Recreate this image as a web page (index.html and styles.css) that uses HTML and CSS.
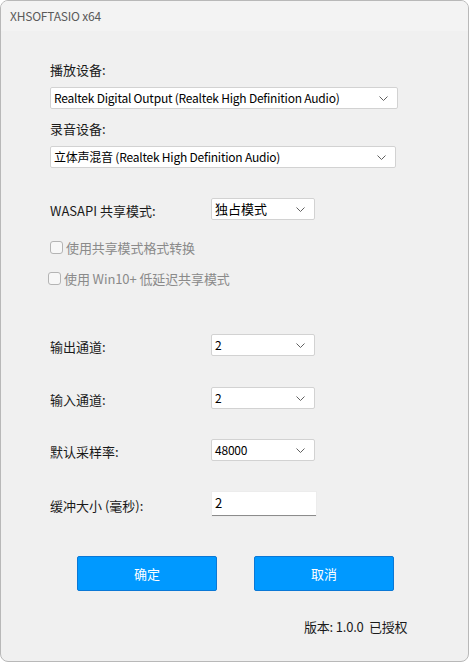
FILE: index.html
```html
<!DOCTYPE html>
<html lang="zh-CN">
<head>
<meta charset="utf-8">
<title>XHSOFTASIO x64</title>
<link rel="stylesheet" href="styles.css">
</head>
<body>
<div class="window">
  <div class="titlebar">XHSOFTASIO x64</div>
  <div class="content">
    <div class="label label-first">播放设备:</div>
    <div class="select wide w1"><span>Realtek Digital Output (Realtek High Definition Audio)</span><svg class="chev" viewBox="0 0 9 5"><path d="M0.5 0.5 L4.5 4.5 L8.5 0.5" /></svg></div>
    <div class="label label-second">录音设备:</div>
    <div class="select wide w2"><span>立体声混音 (Realtek High Definition Audio)</span><svg class="chev" viewBox="0 0 9 5"><path d="M0.5 0.5 L4.5 4.5 L8.5 0.5" /></svg></div>

    <div class="row row-wasapi">
      <div class="rlabel">WASAPI 共享模式:</div>
      <div class="select small"><span class="cjk">独占模式</span><svg class="chev" viewBox="0 0 9 5"><path d="M0.5 0.5 L4.5 4.5 L8.5 0.5" /></svg></div>
    </div>

    <div class="check check1"><span class="box"></span><span class="ctext">使用共享模式格式转换</span></div>
    <div class="check check2"><span class="box"></span><span class="ctext">使用 Win10+ 低延迟共享模式</span></div>

    <div class="row row-out">
      <div class="rlabel">输出通道:</div>
      <div class="select small"><span>2</span><svg class="chev" viewBox="0 0 9 5"><path d="M0.5 0.5 L4.5 4.5 L8.5 0.5" /></svg></div>
    </div>
    <div class="row row-in">
      <div class="rlabel">输入通道:</div>
      <div class="select small"><span>2</span><svg class="chev" viewBox="0 0 9 5"><path d="M0.5 0.5 L4.5 4.5 L8.5 0.5" /></svg></div>
    </div>
    <div class="row row-rate">
      <div class="rlabel">默认采样率:</div>
      <div class="select small"><span>48000</span><svg class="chev" viewBox="0 0 9 5"><path d="M0.5 0.5 L4.5 4.5 L8.5 0.5" /></svg></div>
    </div>
    <div class="row row-buf">
      <div class="rlabel">缓冲大小 (毫秒):</div>
      <div class="textbox">2</div>
    </div>

    <div class="buttons">
      <div class="btn">确定</div>
      <div class="btn">取消</div>
    </div>

    <div class="version">版本: 1.0.0&nbsp;&nbsp;已授权</div>
  </div>
</div>
</body>
</html>
```
FILE: styles.css
```css
* { box-sizing: border-box; }
html, body {
  margin: 0;
  padding: 0;
  background: #ffffff;
}
body {
  width: 469px;
  height: 662px;
  overflow: hidden;
  font-family: "Noto Sans CJK SC", "Noto Sans", sans-serif;
  font-size: 13px;
  color: #1a1a1a;
}
.window {
  width: 469px;
  height: 662px;
  border: 1px solid #b8b8b8;
  border-radius: 8px;
  background: #f0f0f0;
  overflow: hidden;
  display: flex;
  flex-direction: column;
}
.titlebar {
  height: 30px;
  flex: none;
  background: #f3f3f3;
  color: #5a5a5a;
  font-size: 12px;
  line-height: 30px;
  padding-left: 9px;
  letter-spacing: -0.2px;
}
.content {
  padding-left: 49px;
  display: flex;
  flex-direction: column;
}
.label {
  height: 18px;
  line-height: 18px;
}
.label-first { margin-top: 30px; }
.label-second { margin-top: 11px; }
.select {
  height: 22px;
  background: #ffffff;
  border: 1px solid #d2d2d2;
  border-radius: 2px;
  display: flex;
  align-items: center;
  justify-content: space-between;
  padding-left: 3px;
  padding-right: 9px;
  line-height: 20px;
  color: #000;
  font-size: 12px;
  letter-spacing: -0.22px;
}
.select span { white-space: nowrap; }
.select .cjk { font-size: 13px; letter-spacing: 0; }
.wide.w1 { width: 348px; margin-top: 8px; }
.wide.w2 { width: 346px; margin-top: 8px; }
.chev {
  width: 9px;
  height: 5px;
  flex: none;
  fill: none;
  stroke: #606060;
  stroke-width: 1;
}
.row {
  display: flex;
  align-items: center;
  height: 22px;
}
.rlabel {
  width: 161px;
  line-height: 18px;
  position: relative;
  top: 2px;
}
.row .select.small { width: 104px; }
.row-wasapi { margin-top: 30px; }
.row-out { margin-top: 47px; }
.row-in { margin-top: 31px; }
.row-rate { margin-top: 30px; }
.row-buf { margin-top: 31px; height: 24px; }
.check {
  display: flex;
  align-items: center;
  height: 18px;
  color: #8a8a8a;
  letter-spacing: -0.1px;
}
.check1 { margin-top: 18px; }
.check2 { margin-top: 13px; margin-left: -2px; }
.box {
  width: 13px;
  height: 13px;
  border: 1px solid #b4b4b4;
  border-radius: 3px;
  background: #f7f7f7;
  margin-right: 3px;
}
.textbox {
  width: 104px;
  height: 24px;
  margin-left: 1px;
  background: #ffffff;
  border-bottom: 1px solid #8c8c8c;
  box-shadow: 0 0 0 1px #ececec;
  padding-left: 3px;
  line-height: 22px;
  color: #000;
}
.buttons {
  display: flex;
  gap: 37px;
  margin-top: 40px;
  margin-left: 27px;
}
.btn {
  width: 140px;
  height: 35px;
  background: #0099ff;
  border: 1px solid #0a78d6;
  border-radius: 2px;
  color: #ffffff;
  display: flex;
  align-items: center;
  justify-content: center;
  font-size: 13px;
}
.version {
  margin-top: 27px;
  margin-left: 254px;
  line-height: 18px;
  color: #1a1a1a;
  letter-spacing: -0.2px;
}
```
